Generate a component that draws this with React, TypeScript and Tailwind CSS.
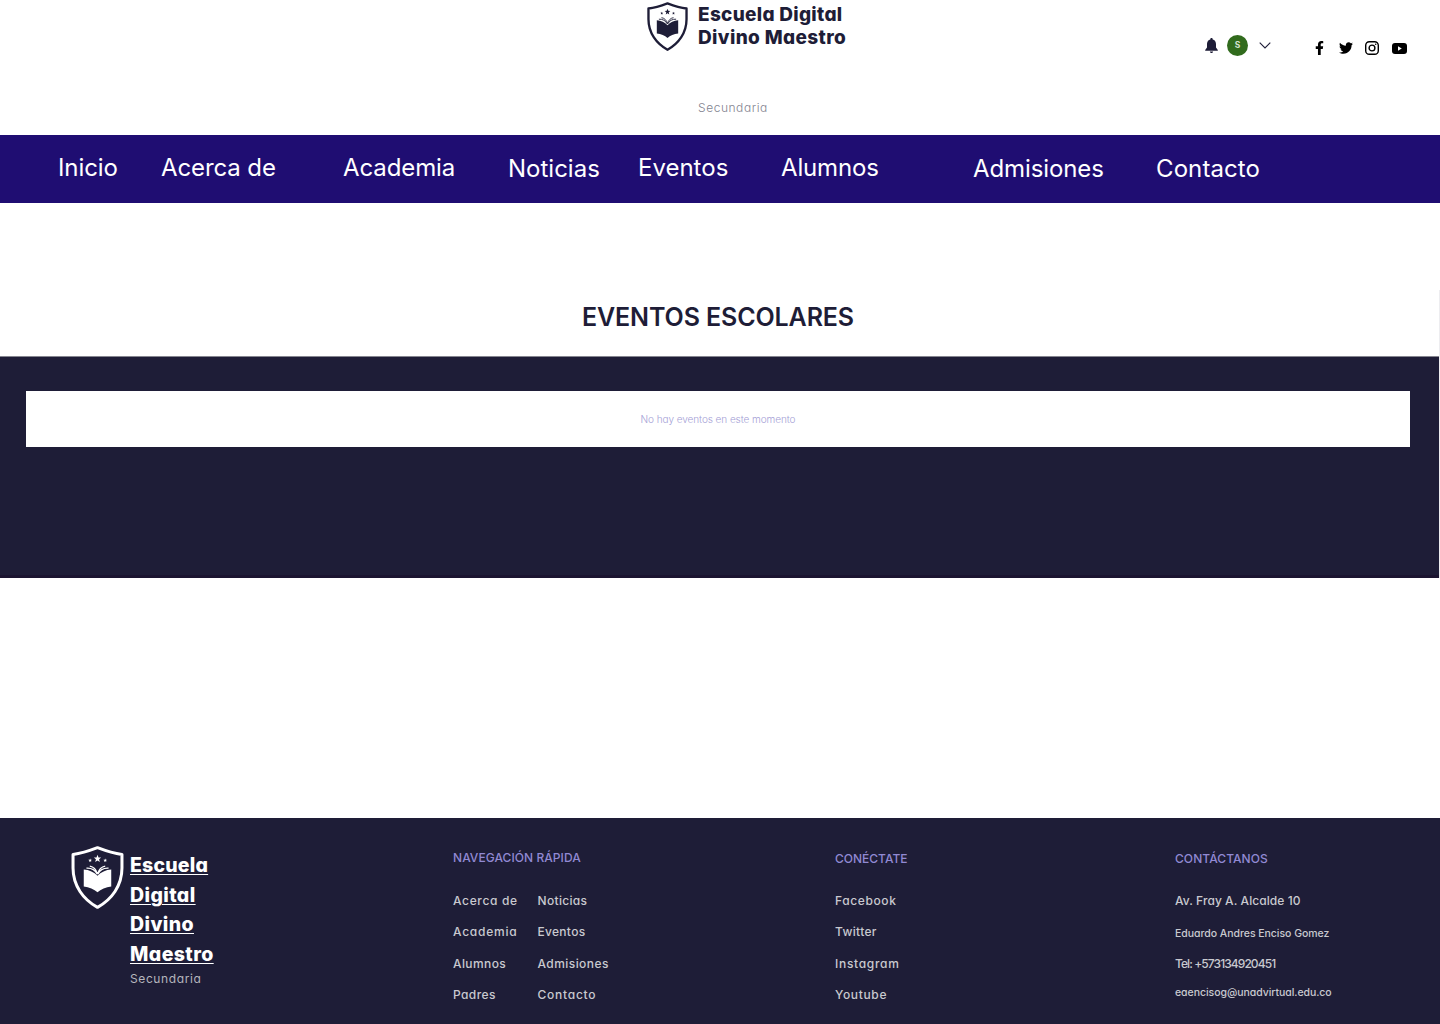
import React from "react";
import { FaFacebookF, FaTwitter } from "react-icons/fa";

function Shield({ className }: { className: string }) {
  return (
    <svg viewBox="0 0 156 188" className={className} fill="currentColor" aria-hidden="true">
      <path
        d="M78 5 C57 13 31 22 5 25 V66 C5 119 36 160 78 183 C120 160 151 119 151 66 V25 C125 22 99 13 78 5Z"
        fill="none"
        stroke="currentColor"
        strokeWidth="9"
        strokeLinejoin="round"
      />
      <path d="M78 26l3 8 8 .4-6.300 5.200 2.100 8.400-6.800-4.700-6.800 4.700 2.100-8.400-6.300-5.200 8-.4z" />
      <path d="M56 37l1.500 4 4 .3-3.100 2.600 1 4.100-3.400-2.300-3.400 2.300 1-4.100-3.100-2.600 4-.3z" />
      <path d="M101 37l1.500 4 4 .3-3.100 2.600 1 4.100-3.400-2.300-3.400 2.300 1-4.100-3.100-2.600 4-.3z" />
      <path d="M37 70 C53 71 68 78 78 89 C88 78 103 71 119 70 V121 C103 123 88 129 78 138 C68 129 53 123 37 121Z" />
      <path
        d="M45 66 C60 65 71 72 77 84 M55 60 C67 62 74 70 78 83 M111 66 C96 65 85 72 79 84 M101 60 C89 62 82 70 78 83"
        fill="none"
        stroke="currentColor"
        strokeWidth="3.500"
      />
    </svg>
  );
}

function Bell() {
  return (
    <svg viewBox="0 0 13 15" className="mt-[38px] h-[15px] w-[13px]" fill="#1e1d37" aria-hidden="true">
      <path d="M6.500 0c.7 0 1.200.5 1.200 1.200v.3c2 .5 3.300 2.300 3.300 4.500v3.600l1.800 2.400v.8H.2V12L2 9.600V6c0-2.200 1.300-4 3.300-4.500v-.3C5.300.5 5.800 0 6.500 0ZM4.900 13.400h3.200c0 .9-.7 1.500-1.600 1.500s-1.600-.6-1.600-1.500Z" />
    </svg>
  );
}

function Instagram() {
  return (
    <svg viewBox="0 0 14 14" className="h-3.5 w-3.5" fill="none" stroke="#000" strokeWidth="1.400" aria-hidden="true">
      <rect x=".7" y=".7" width="12.600" height="12.600" rx="3.600" />
      <circle cx="7" cy="7" r="2.900" />
      <circle cx="10.700" cy="3.300" r=".8" fill="#000" stroke="none" />
    </svg>
  );
}

function Youtube() {
  return (
    <svg viewBox="0 0 15 11" className="h-[11px] w-[15px]" aria-hidden="true">
      <rect width="15" height="11" rx="3" fill="#000" />
      <path d="M6 3.300v4.400l3.800-2.200z" fill="#fff" />
    </svg>
  );
}

const nav = [
  { label: "Inicio", box: "w-[103px] tracking-[-0.1px]" },
  { label: "Acerca de", box: "w-[182px] tracking-[-0.1px]" },
  { label: "Academia", box: "w-[165px] tracking-[-0.1px]" },
  { label: "Noticias", box: "w-[130px] pt-px" },
  { label: "Eventos", box: "w-[143px]" },
  { label: "Alumnos", box: "w-[192px] tracking-[-0.15px]" },
  { label: "Admisiones", box: "w-[183px] pt-px tracking-[-0.1px]" },
  { label: "Contacto", box: "w-[120px] pt-px tracking-[0.1px]" },
];

function Links({ items, className = "" }: { items: [string, string][]; className?: string }) {
  return (
    <ul className={`text-[12px] font-medium text-[#c9c9cf] ${className}`}>
      {items.map(([label, style]) => (
        <li key={label} className={`flex h-[31.300px] items-center whitespace-nowrap ${style}`}>
          {label}
        </li>
      ))}
    </ul>
  );
}

export default function App() {
  return (
    <div className="flex h-[1024px] w-[1440px] flex-col overflow-hidden bg-white font-['Inter',sans-serif] text-[#1e1d37] [font-feature-settings:'cv11']">
      <header className="flex h-[135px] shrink-0">
        <div className="flex w-[1205px] pl-[647px]">
          <Shield className="mt-[2px] h-[49px] w-[41px] shrink-0" />
          <div className="ml-[10px] whitespace-nowrap">
            <h1 className="pt-[2.500px] text-[19px] leading-[23.500px] font-extrabold">
              <span className="block tracking-[0.29px]">Escuela Digital</span>
              <span className="block tracking-[0.37px]">Divino Maestro</span>
            </h1>
            <p className="mt-[48.500px] text-[12px] leading-[20px] font-light tracking-[0.55px] text-[#83838f]">
              Secundaria
            </p>
          </div>
        </div>
        <Bell />
        <div className="mt-[35px] ml-[9px] flex h-[21px] w-[21px] items-center justify-center rounded-full bg-[#316b1d] text-[8.500px] font-bold text-[#d5e2d0]">
          S
        </div>
        <svg viewBox="0 0 12 7" className="mt-[42px] ml-[10.500px] h-[7px] w-[12px]" fill="none" stroke="#1e1d37" strokeWidth="1.100" aria-hidden="true">
          <path d="M.7.7 6 6 11.300.7" />
        </svg>
        <div className="mt-[40px] ml-[44.500px] flex h-4 items-center">
          <FaFacebookF className="h-[14px] w-[9px]" color="#000" />
          <FaTwitter className="ml-[15px] h-[14px] w-[14px]" color="#000" />
          <span className="ml-[12px]"><Instagram /></span>
          <span className="ml-[12.500px]"><Youtube /></span>
        </div>
      </header>

      <nav className="flex h-[68px] shrink-0 bg-[#1f0d72] pl-[58px] text-[24px] leading-[65px] text-white [font-feature-settings:normal]">
        {nav.map((item) => (
          <a key={item.label} className={`block shrink-0 whitespace-nowrap ${item.box}`}>
            {item.label}
          </a>
        ))}
      </nav>

      <main className="mt-[87px] h-[288px] shrink-0 border-r border-[#ededf0]">
        <h2 className="flex h-[66px] items-start justify-center pt-[7px] pr-[3px] text-[25px] leading-[40px] font-semibold tracking-[-0.12px]">
          EVENTOS ESCOLARES
        </h2>
        <section className="h-[222px] border-t border-b-[3px] border-t-[#85858f] border-b-[#1b1430] bg-[#1e1d37] pt-[34px] pr-[29px] pl-[26px]">
          <div className="flex h-[56px] items-center justify-center bg-white text-[10px] font-light tracking-[-0.07px] text-[#a5a1d6]">
            No hay eventos en este momento
          </div>
        </section>
      </main>

      <footer className="mt-[240px] flex h-[206px] shrink-0 bg-[#1e1d37] pl-[71px]">
        <div className="flex w-[382px] pt-[28px]">
          <Shield className="h-[63px] w-[53px] shrink-0 text-white" />
          <div className="ml-[6px] pt-[5px]">
            <p className="text-[19.500px] leading-[29.500px] font-extrabold text-white underline decoration-1 underline-offset-2">
              <span className="block tracking-[0.2px]">Escuela</span>
              <span className="block tracking-[0.4px]">Digital</span>
              <span className="block tracking-[0.4px]">Divino</span>
              <span className="block tracking-[0.4px]">Maestro</span>
            </p>
            <p className="text-[12px] leading-[20px] tracking-[0.6px] text-[#b5b5bd]">Secundaria</p>
          </div>
        </div>
        <div className="w-[382px] pt-[30px]">
          <h3 className="text-[12px] leading-[20px] font-medium tracking-[0.06px] text-[#9189d3]">NAVEGACIÓN RÁPIDA</h3>
          <div className="flex pt-[17.500px]">
            <Links
              className="w-[84.500px]"
              items={[
                ["Acerca de", "tracking-[0.65px]"],
                ["Academia", "tracking-[0.75px]"],
                ["Alumnos", "tracking-[0.4px]"],
                ["Padres", "tracking-[0.4px]"],
              ]}
            />
            <Links
              items={[
                ["Noticias", "tracking-[0.33px]"],
                ["Eventos", "tracking-[0.3px]"],
                ["Admisiones", "tracking-[0.43px]"],
                ["Contacto", "tracking-[0.75px]"],
              ]}
            />
          </div>
        </div>
        <div className="w-[340px] pt-[31px]">
          <h3 className="text-[12px] leading-[20px] font-medium text-[#9189d3]">CONÉCTATE</h3>
          <Links
            className="mt-[16.500px]"
            items={[
              ["Facebook", "tracking-[0.6px]"],
              ["Twitter", "tracking-[0.33px]"],
              ["Instagram", "tracking-[0.7px]"],
              ["Youtube", "tracking-[0.65px]"],
            ]}
          />
        </div>
        <div className="pt-[31px]">
          <h3 className="text-[12px] leading-[20px] font-medium tracking-[0.07px] text-[#9189d3]">CONTÁCTANOS</h3>
          <Links
            className="mt-[16.500px]"
            items={[
              ["Av. Fray A. Alcalde 10", "tracking-[0.07px]"],
              ["Eduardo Andres Enciso Gomez", "pt-[2px] text-[10.500px] tracking-[-0.04px]"],
              ["Tel: +573134920451", "tracking-[-0.92px]"],
              ["eaencisog@unadvirtual.edu.co", "pb-[4px] text-[10.500px] tracking-[-0.05px]"],
            ]}
          />
        </div>
      </footer>
    </div>
  );
}
